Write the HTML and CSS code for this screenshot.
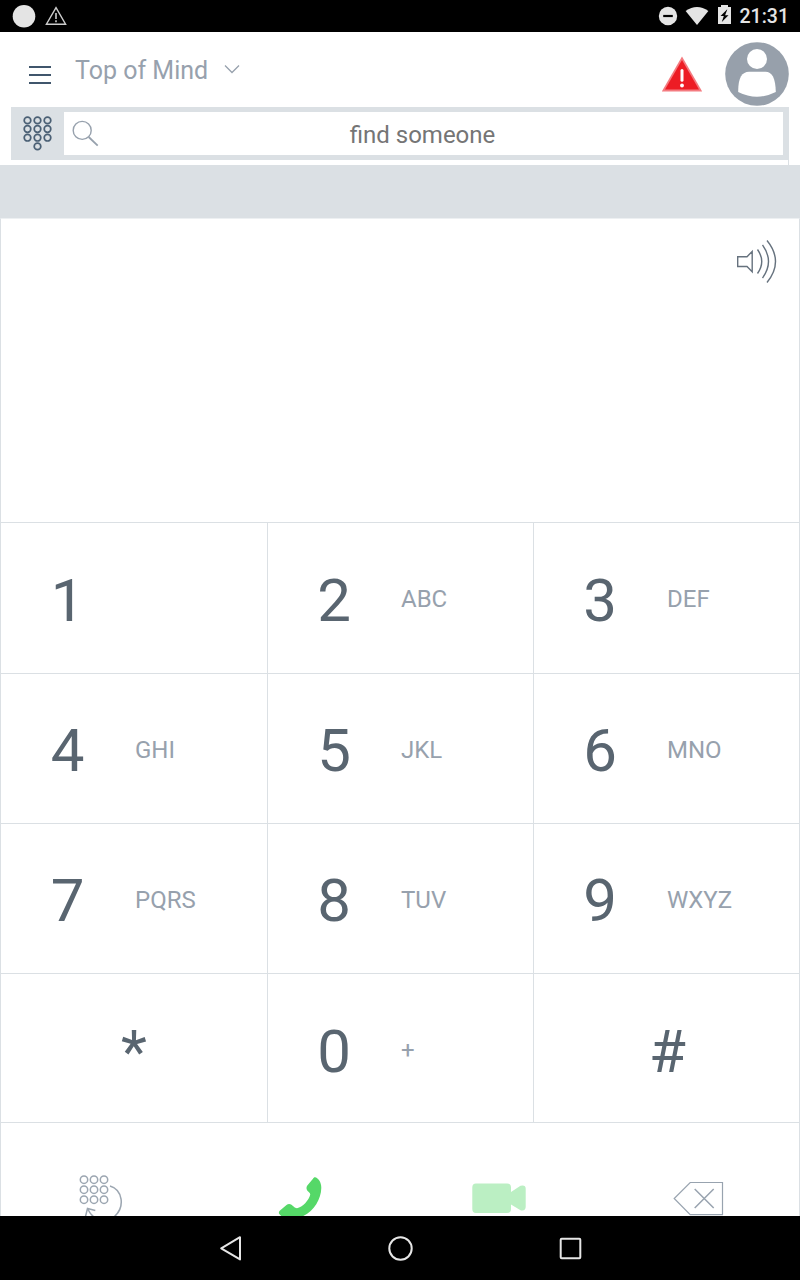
FILE: index.html
```html
<!DOCTYPE html>
<html lang="en">
<head>
<meta charset="utf-8">
<title>Dialer</title>
<link rel="stylesheet" href="styles.css">
</head>
<body>
<div class="screen">
  <div class="status">
    <div class="status-group">
      <svg width="60" height="32" viewBox="10 0 60 32"><circle cx="24" cy="16.3" r="11.3" fill="#e4e4e4"/><path d="M56 7.6 65.6 24.200H46.400Z" fill="none" stroke="#ccc" stroke-width="1.4"/><path d="M56 13v6M56 20.300v2" stroke="#ccc" stroke-width="1.600"/></svg>
    </div>
    <div class="status-group">
      <svg width="80" height="32" viewBox="655 0 80 32"><circle cx="668" cy="16" r="9.200" fill="#e4e4e4"/><path d="M663.200 16h9.600" stroke="#000" stroke-width="2.200"/><path d="M685.600 11Q697 2.800 708.400 11L697 25Z" fill="#e4e4e4"/><path d="M718 7h3V5h7v2h3v17h-13Z" fill="#e4e4e4"/><path d="M727 9.500 720.500 16h3.300l-2 6 6.700-6.800h-3.400l2.200-5.700Z" fill="#000"/></svg>
      <span class="clock">21:31</span>
    </div>
  </div>

  <header class="header">
    <svg class="menu" width="24" height="24" viewBox="28 62 24 24"><path d="M29 67h22M29 75h22M29 83h22" stroke="#40566c" stroke-width="2"/></svg>
    <h1 class="title">Top of Mind</h1>
    <svg class="chevron" width="18" height="12" viewBox="223 63 18 12"><path d="m225 65.500 7 7 7-7" fill="none" stroke="#97a1ad" stroke-width="1.300"/></svg>
    <svg class="alert" width="42" height="38" viewBox="661 55 42 38"><path d="M682 56.500 702.200 91.500H661.800Z" fill="#f47b80"/><path d="M682 60 699 89.500H665Z" fill="#ed1c24"/><path d="M682 70.500v9.700" stroke="#fff" stroke-width="3" stroke-linecap="round"/><circle cx="682" cy="85.500" r="1.900" fill="#fff"/></svg>
    <svg class="avatar" width="64" height="64" viewBox="725 42 64 64"><circle cx="757" cy="74" r="31.800" fill="#97a0ab"/><circle cx="757" cy="59" r="10" fill="#fff"/><path d="M738.200 92C738 78 742 71.800 749 71.800h16.500C772 71.800 775.500 78 775.800 92Q757 101.500 738.200 92Z" fill="#fff"/></svg>
  </header>

  <div class="search">
    <svg class="keypad-icon" width="53" height="53" viewBox="11 107 53 53"><g fill="none" stroke="#4b6075" stroke-width="1.700"><circle cx="27.500" cy="120.400" r="3.300"/><circle cx="37.500" cy="120.400" r="3.300"/><circle cx="47.500" cy="120.400" r="3.300"/><circle cx="27.500" cy="129" r="3.300"/><circle cx="37.500" cy="129" r="3.300"/><circle cx="47.500" cy="129" r="3.300"/><circle cx="27.500" cy="137.700" r="3.300"/><circle cx="37.500" cy="137.700" r="3.300"/><circle cx="47.500" cy="137.700" r="3.300"/><circle cx="37.500" cy="146.400" r="3.300"/></g></svg>
    <div class="field">
      <svg class="magnifier" width="30" height="30" viewBox="70 118 30 30"><g fill="none" stroke="#97a1ad"><circle cx="82.200" cy="129.400" r="9" stroke-width="1.400"/><path d="m88.700 136 9 8.700" stroke-width="1.800"/></g></svg>
      <span class="hint">find someone</span>
    </div>
  </div>
  <div class="edge"></div>
  <div class="band"></div>

  <main class="dialer">
    <div class="display">
      <svg width="42" height="46" viewBox="736 238 42 46"><g fill="none" stroke="#66727e" stroke-width="1.400"><path d="M737.700 256.700h9.300l5.200-5.200v20.200l-5.200-5.200h-9.300Z"/><path d="M757.500 249.500q8.500 12 0 24M762.500 245q12 16.500 0 33M767 240.500q17 21 0 42"/></g></svg>
    </div>
    <div class="keys">
      <div class="key"><span class="digit">1</span></div>
      <div class="key"><span class="digit">2</span><span class="letters">ABC</span></div>
      <div class="key"><span class="digit">3</span><span class="letters">DEF</span></div>
      <div class="key"><span class="digit">4</span><span class="letters">GHI</span></div>
      <div class="key"><span class="digit">5</span><span class="letters">JKL</span></div>
      <div class="key"><span class="digit">6</span><span class="letters">MNO</span></div>
      <div class="key"><span class="digit">7</span><span class="letters">PQRS</span></div>
      <div class="key"><span class="digit">8</span><span class="letters">TUV</span></div>
      <div class="key"><span class="digit">9</span><span class="letters">WXYZ</span></div>
      <div class="key last symbol"><span class="digit">*</span></div>
      <div class="key last"><span class="digit">0</span><span class="letters">+</span></div>
      <div class="key last symbol"><span class="digit">#</span></div>
    </div>
    <div class="actions">
      <svg width="60" height="46" viewBox="71 1170 60 46"><g fill="none" stroke="#9ca6b1" stroke-width="1.500"><circle cx="84" cy="1179.700" r="3.700"/><circle cx="94" cy="1179.700" r="3.700"/><circle cx="104" cy="1179.700" r="3.700"/><circle cx="84" cy="1189.700" r="3.700"/><circle cx="94" cy="1189.700" r="3.700"/><circle cx="104" cy="1189.700" r="3.700"/><circle cx="84" cy="1199.700" r="3.700"/><circle cx="94" cy="1199.700" r="3.700"/><circle cx="104" cy="1199.700" r="3.700"/><path d="M110 1186C123 1190 125 1207 114.500 1216.500M85.500 1216.500 87.500 1208.500 95.300 1210.500M87.500 1208.500Q90 1214 94 1217"/></g></svg>
      <svg width="60" height="46" viewBox="270 1170 60 46"><path d="M315.200 1177.300C319 1178.600 321.400 1183 321.300 1188 321 1201.500 311 1215.500 296 1218.500 289 1219.800 281 1217.500 279 1213.500 278.600 1212.300 279 1211.500 280 1210.600L286.500 1205C288 1203.700 290 1203.700 291.500 1204.800L293.600 1206.600C294.700 1207.700 295.700 1208.200 297 1208.200 302.500 1207.500 309 1200 310.200 1194.800 310.400 1193.400 309.600 1192.700 308.500 1191.700 306.300 1190 305.900 1187.500 307.300 1185.500L313 1178.700C313.700 1177.800 314.300 1177.100 315.200 1177.300Z" fill="#55d868"/></svg>
      <svg width="60" height="46" viewBox="470 1170 60 46"><path d="M476 1183.500h31q4 0 4 4v4.500l9.500-6.200q5.200-1.300 5.200 3v18q0 4.500-5.200 3.500l-9.500-5.800v4.500q0 4-4 4h-31q-3.700 0-3.700-4v-21.500q0-4 3.700-4Z" fill="#bbefc3"/></svg>
      <svg width="60" height="46" viewBox="669 1170 60 46"><g fill="none" stroke="#98a3af" stroke-width="1.200"><path d="M690.200 1182.500h32.300v32.100h-32.300L674.200 1198.500Z"/><path d="m694.700 1189 19 19M713.700 1189l-19 19" stroke-width="1.500"/></g></svg>
    </div>
  </main>

  <nav class="navbar">
    <svg width="40" height="40" viewBox="210 1228 40 40"><path d="M240 1237.200v22.200L221.200 1248.300Z" fill="none" stroke="#e6e6e6" stroke-width="2" stroke-linejoin="round"/></svg>
    <svg width="40" height="40" viewBox="380 1228 40 40"><circle cx="400.500" cy="1248.500" r="11.200" fill="none" stroke="#e6e6e6" stroke-width="2"/></svg>
    <svg width="40" height="40" viewBox="550 1228 40 40"><rect x="560.700" y="1238.700" width="19.600" height="19.600" rx="1" fill="none" stroke="#e6e6e6" stroke-width="2"/></svg>
  </nav>
</div>
</body>
</html>
```
FILE: styles.css
```css
* { box-sizing: border-box; }
body { margin: 0; font-family: Roboto, "Noto Sans", sans-serif; background: #fff; }
svg { display: block; flex: none; }
.screen { width: 800px; height: 1280px; display: flex; flex-direction: column; overflow: hidden; }

.status { height: 32px; flex: none; background: #000; display: flex; justify-content: space-between; padding: 0 11px 0 10px; }
.status-group { height: 32px; display: flex; align-items: center; gap: 5px; }
.clock { color: #e4e4e4; font-size: 19.500px; font-weight: 500; line-height: 24px; padding-top: 2px; }

.header { height: 75px; flex: none; display: flex; align-items: flex-start; padding: 10px 11px 0 28px; }
.menu { margin-top: 20px; }
.title { margin: 14px 0 0 23px; width: 148px; font-size: 25px; line-height: 30px; font-weight: 400; color: #97a1ad; white-space: nowrap; }
.chevron { margin-top: 21px; }
.alert { margin: 13px 22px 0 auto; }

.search { height: 53px; flex: none; margin: 0 11px; background: #dbe0e4; display: flex; padding-right: 6px; }
.keypad-icon { align-self: flex-start; }
.field { flex: 1; margin: 5px 0; background: #fff; display: flex; align-items: center; padding: 0 6px; }
.hint { flex: 1; text-align: center; padding-right: 32px; font-size: 24px; line-height: 28px; color: #757575; margin-top: 2px; }
.edge { height: 5px; flex: none; margin-right: 11px; border-right: 1px solid #dbe0e4; }
.band { height: 53px; flex: none; background: #dbe0e4; }

.dialer { flex: 1; display: flex; flex-direction: column; border: 1px solid #dbe0e4; border-top-color: #edf0f2; border-bottom: 0; }
.display { height: 303px; flex: none; display: flex; justify-content: flex-end; align-items: flex-start; padding: 19px 21px 0 0; }
.keys { flex: none; display: grid; grid-template-columns: 267px 266px 265px; grid-template-rows: 151px 150px 150px 149px; border-bottom: 1px solid #dbe0e4; }
.key { display: grid; grid-template-columns: 133px 1fr; align-items: center; border-top: 1px solid #dbe0e4; border-right: 1px solid #dbe0e4; }
.key:nth-child(3n) { border-right: 0; }
.key:not(:nth-child(3n+1)) { grid-template-columns: 132px 1fr; }
.key.symbol, .key.symbol:nth-child(3n) { grid-template-columns: 1fr; }
.digit { padding-top: 5px; text-align: center; font-size: 60px; line-height: 70px; color: #596570; }
.key.last .digit { padding-top: 7px; }
.key.symbol:nth-child(3n) .digit { padding-left: 2px; }
.letters { padding: 2px 0 0 1px; font-size: 24px; line-height: 28px; color: #97a1ad; }
.key.last .letters { padding-top: 4px; }
.key:nth-child(-n+3) .letters { padding-top: 1px; }
.actions { flex: 1; display: grid; grid-template-columns: repeat(4, 199.500px); align-items: end; justify-items: center; }

.navbar { height: 64px; flex: none; background: #000; display: flex; justify-content: center; align-items: center; gap: 130px; }
```
